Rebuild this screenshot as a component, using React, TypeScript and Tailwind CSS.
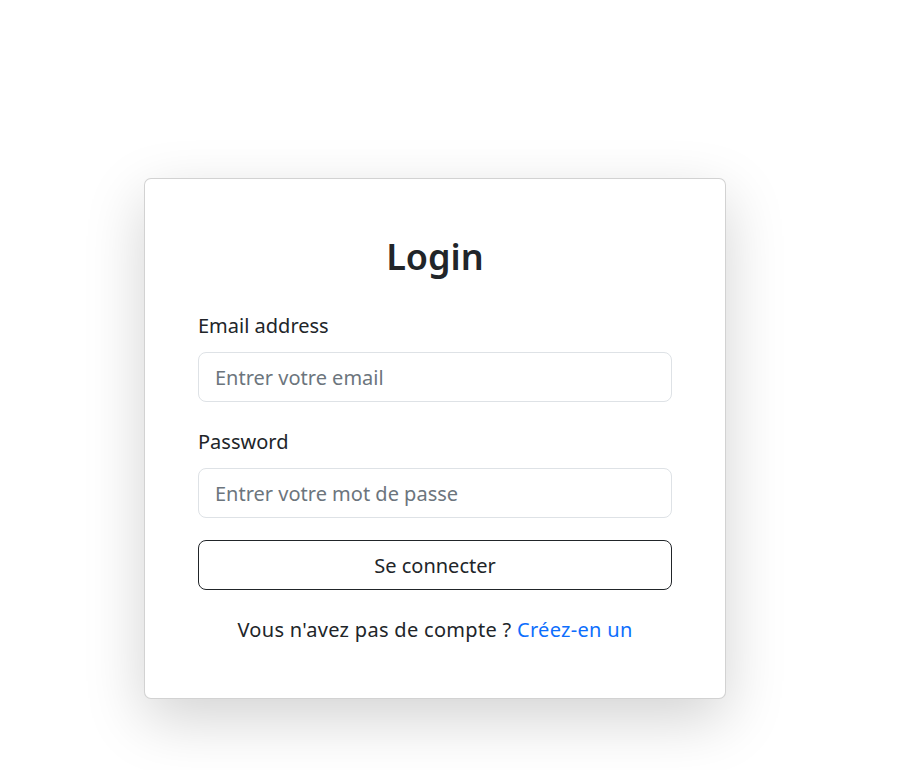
export default function App() {
  return (
    <div className="min-h-[770px] bg-white pt-[178px] font-['Noto_Sans',sans-serif] text-[#212529]">
      <div className="ml-[144px] w-[582px] rounded-[7px] border border-black/[0.175] bg-white px-[53px] pt-[54px] pb-[53px] shadow-[0_20px_60px_rgba(0,0,0,0.175)]">
        <h2 className="mb-[30px] text-center text-[36px] font-semibold leading-[48px]">Login</h2>

        <form onSubmit={(e) => e.preventDefault()}>
          <div className="mb-[25px]">
            <label className="mb-[11px] block text-[20px] leading-[30px]">Email address</label>
            <input
              type="email"
              placeholder="Entrer votre email"
              className="block h-[50px] w-full rounded-[8px] border border-[#dee2e6] px-[16px] text-[20px] outline-none placeholder:text-[#6c757d]"
            />
          </div>

          <div className="mb-[22px]">
            <label className="mb-[11px] block text-[20px] leading-[30px]">Password</label>
            <input
              type="password"
              placeholder="Entrer votre mot de passe"
              className="block h-[50px] w-full rounded-[8px] border border-[#dee2e6] px-[16px] text-[20px] outline-none placeholder:text-[#6c757d]"
            />
          </div>

          <button
            type="submit"
            className="block h-[50px] w-full rounded-[8px] border border-[#212529] bg-white pt-[2px] text-[20px] text-[#212529]"
          >
            Se connecter
          </button>
        </form>

        <p className="mt-[25px] text-center text-[20px] leading-[30px] tracking-[0.3px]">
          Vous n'avez pas de compte ? <a href="#" className="text-[#0d6efd]">Créez-en un</a>
        </p>
      </div>
    </div>
  );
}
